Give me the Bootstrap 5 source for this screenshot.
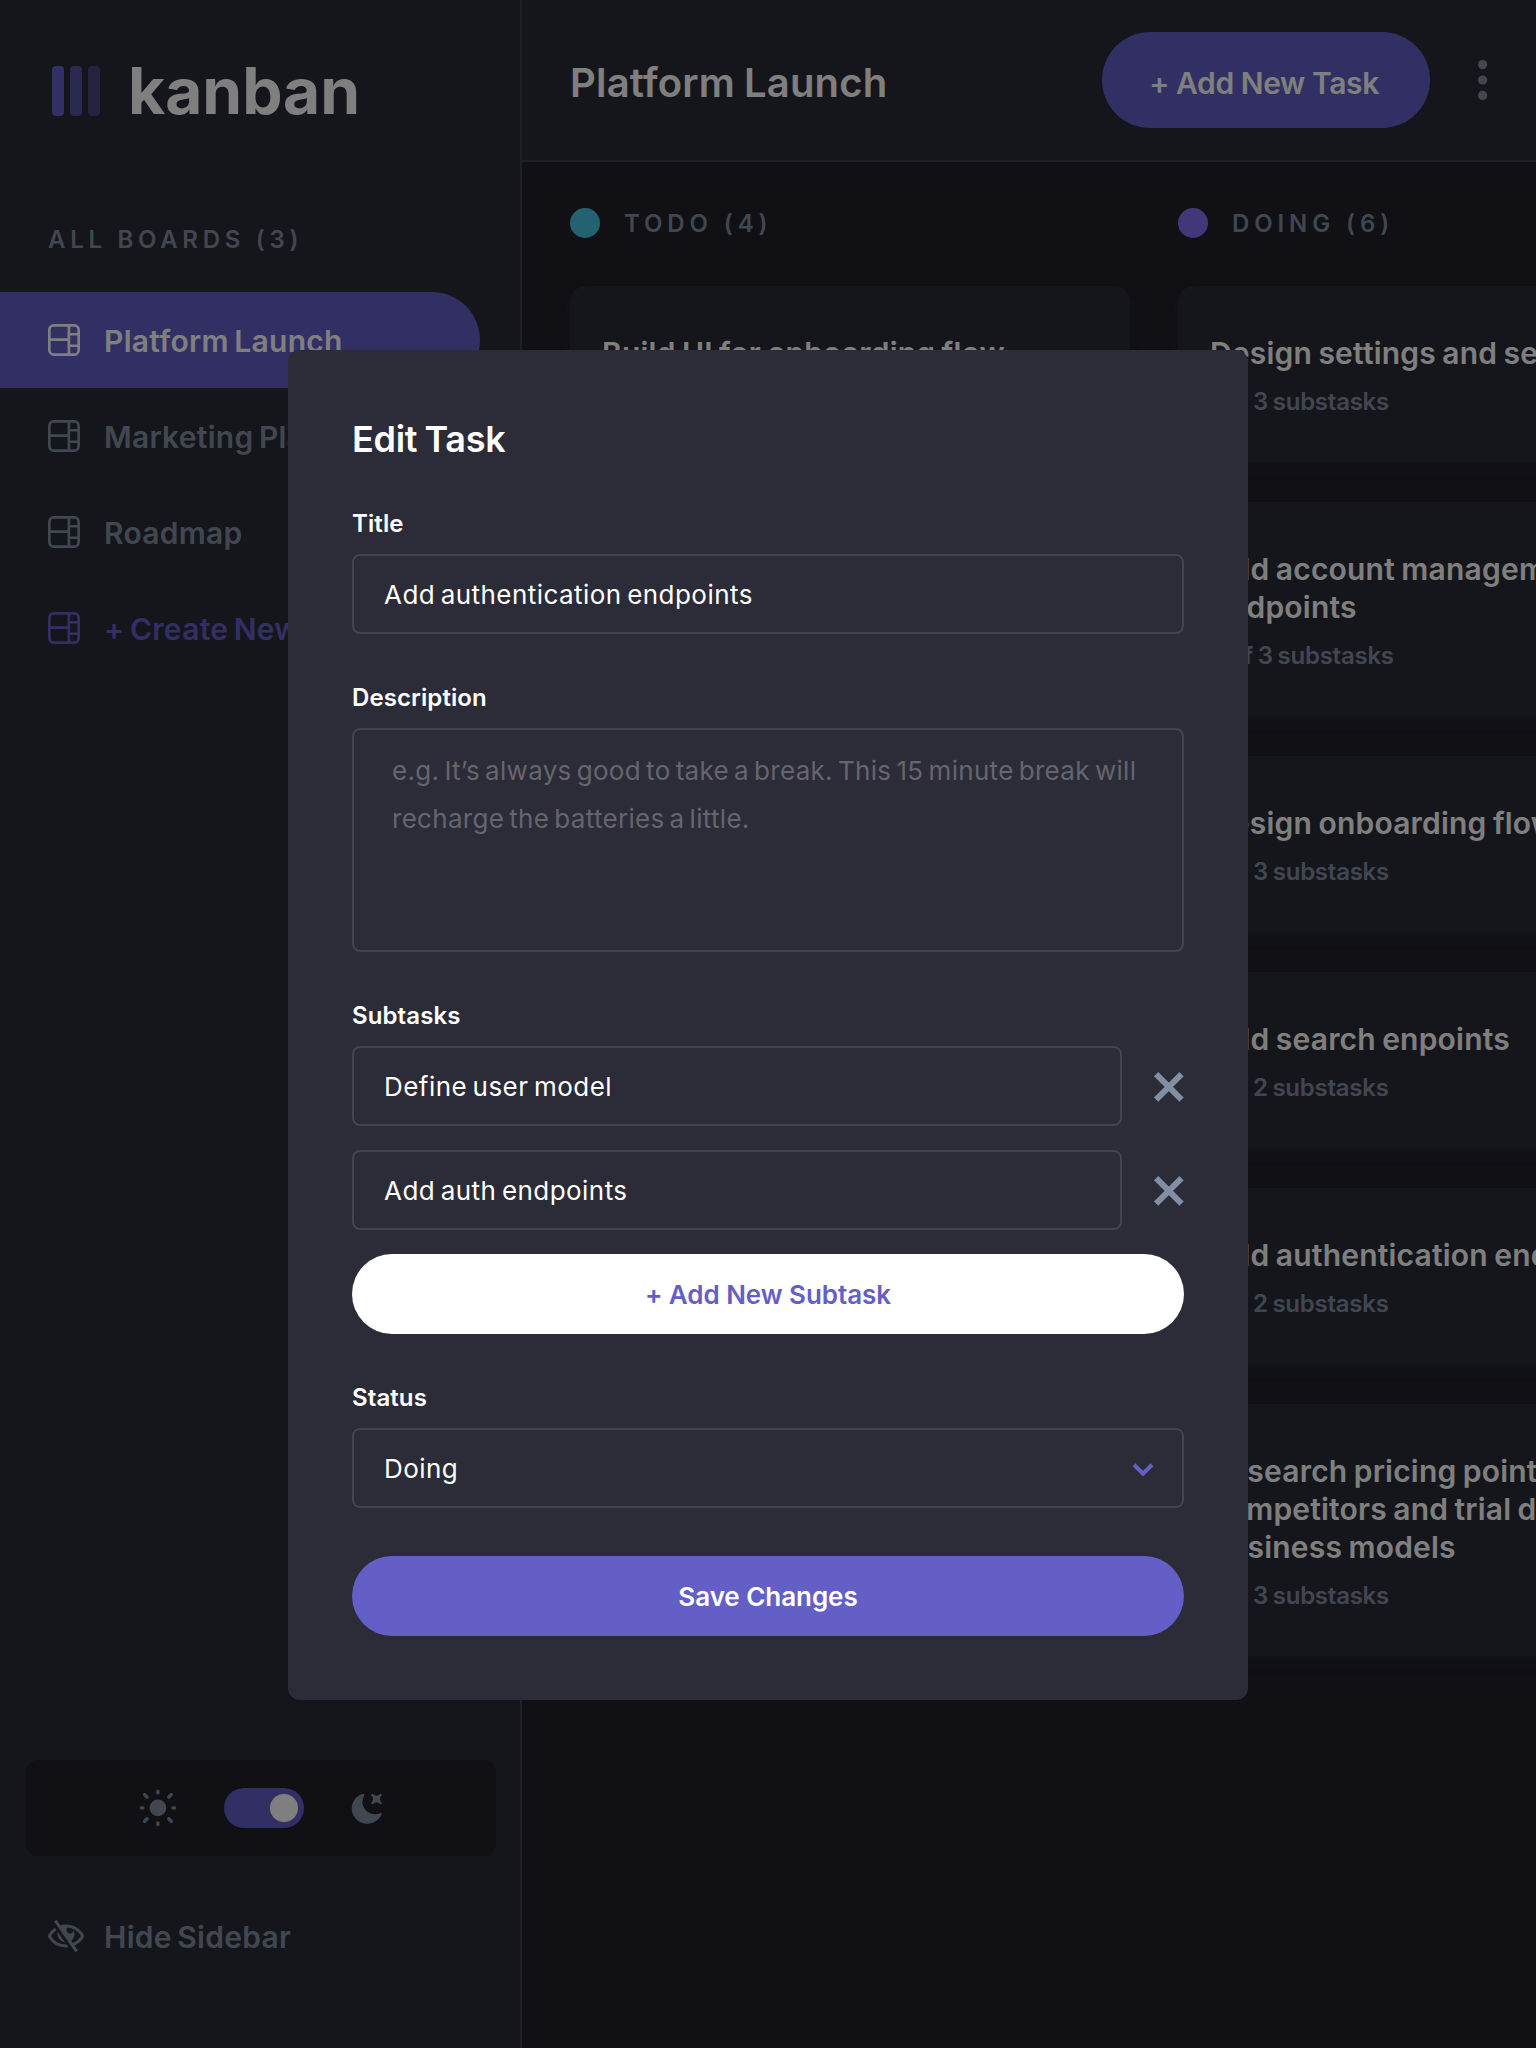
<!DOCTYPE html>
<html lang="en">
<head>
<meta charset="utf-8">
<meta name="viewport" content="width=device-width, initial-scale=1">
<title>Kanban – Platform Launch</title>
<link href="https://cdn.jsdelivr.net/npm/bootstrap@5.3.0/dist/css/bootstrap.min.css" rel="stylesheet">
<style>
  :root {
    --panel: #2b2c37;
    --canvas: #20202a;
    --line: #3e3f4e;
    --muted: #828fa3;
    --accent: #635fc7;
  }
  body {
    font-family: Inter, "Noto Sans", sans-serif;
    letter-spacing: .013em;
    word-spacing: -.09em;
    background: var(--canvas);
    color: #fff;
    overflow: hidden;
  }
  svg { display: block; flex: none; }
  .muted { color: var(--muted); }
  .eyebrow { font-size: 24px; line-height: 30px; font-weight: 600; letter-spacing: 4.9px; word-spacing: 0; color: var(--muted); padding-top: 1px; }

  /* Sidebar */
  .sidebar { width: 522px; background: var(--panel); border-right: 2px solid var(--line); padding-bottom: 64px; }
  .brand { padding: 52px 0 0 52px; gap: 28px; height: 128px; }
  .brand-bars { gap: 6px; padding-top: 14px; }
  .brand-bars span { width: 12px; height: 50px; border-radius: 4px; background: var(--accent); }
  .brand-bars span:nth-child(2) { opacity: .75; }
  .brand-bars span:nth-child(3) { opacity: .5; }
  .brand-name { font-size: 64px; line-height: 78px; font-weight: 700; letter-spacing: 0; }
  .board-head { padding: 97px 0 37px 48px; letter-spacing: 4.7px; }
  .board-link { width: 480px; height: 96px; padding: 0 48px; gap: 24px; font-size: 30px; font-weight: 600; letter-spacing: .28px; word-spacing: -2.4px; color: var(--muted); border-radius: 0 48px 48px 0; white-space: nowrap; text-decoration: none; }
  .board-link span { padding-top: 2px; }
  .board-link.active { background: var(--accent); color: #fff; }
  .board-link.create { color: var(--accent); }
  .hide-link { gap: 20px; }
  .theme-box { height: 96px; margin: 0 24px 32px 26px; border-radius: 12px; background: var(--canvas); gap: 47px; }
  .theme-switch.form-check-input { width: 80px; height: 40px; margin: 0; border: 0; border-radius: 20px; background: var(--accent); padding: 6px; display: flex; justify-content: flex-end; }
  .theme-switch span { width: 28px; height: 28px; border-radius: 50%; background: #fff; }

  /* Header */
  .topbar { height: 162px; background: var(--panel); border-bottom: 2px solid var(--line); padding: 0 48px; }
  .topbar h1 { font-size: 40px; line-height: 50px; font-weight: 600; padding-top: 6px; }
  .btn-task { width: 328px; height: 96px; border-radius: 48px; background: var(--accent); color: #fff; font-size: 30px; font-weight: 600; padding: 12px 14px 6px 10px; letter-spacing: -.4px; }
  .topbar-end { gap: 48px; }

  /* Columns */
  .board { padding: 46px 48px 0; gap: 48px; width: 2000px; }
  .task-col { width: 560px; }
  .col-head { gap: 24px; height: 30px; margin-bottom: 48px; }
  .dot { width: 30px; height: 30px; border-radius: 50%; }
  .dot-todo { background: #49c4e5; }
  .dot-doing { background: #8471f2; }
  .task-list { gap: 40px; }
  .task-card { background: var(--panel); border-radius: 16px; padding: 48px 32px 45px; box-shadow: 0 8px 12px rgba(54, 78, 126, .1); }
  .task-card h3 { font-size: 30px; line-height: 38px; font-weight: 600; margin: 0 0 15px; white-space: nowrap; }
  .task-card p { font-size: 24px; line-height: 30px; font-weight: 600; margin: 0; color: var(--muted); letter-spacing: -.25px; word-spacing: -1px; }

  /* Edit dialog */
  .modal-dialog.task-dialog { width: 960px; max-width: 960px; margin: 350px 0 0 288px; }
  .task-dialog .modal-content { background: var(--panel); border: 0; border-radius: 12px; padding: 64px; height: 1350px; color: #fff; }
  .task-dialog h2 { font-size: 36px; line-height: 46px; font-weight: 600; margin: 2px 0 46px; letter-spacing: -.3px; }
  .task-dialog .form-label { font-size: 24px; line-height: 30px; font-weight: 600; margin: 0 0 15px; padding-top: 1px; display: block; letter-spacing: .1px; }
  .task-dialog .form-control, .status-select { height: 80px; border: 2px solid #414551; border-radius: 8px; background: transparent; color: #fff; font-size: 26px; line-height: 48px; padding: 0 30px; letter-spacing: .45px; word-spacing: -2.2px; }
  .task-dialog textarea.form-control { height: 224px; padding: 17px 38px; resize: none; letter-spacing: .3px; word-spacing: -2.5px; }
  .task-dialog textarea::placeholder { color: #65656e; opacity: 1; }
  .status-select { padding-right: 28px; }
  .status-select span { padding-top: 2px; }
  .form-block { margin-bottom: 48px; }
  .subtask-list { gap: 24px; }
  .subtask-row { gap: 32px; }
  .subtask-row svg { margin-top: 2px; }
  .btn-wide { height: 80px; border-radius: 40px; font-size: 26px; font-weight: 600; width: 100%; border: 0; letter-spacing: -.05px; }
  .btn-light-pill, .btn-light-pill:hover { background: #fff; color: var(--accent); }
  .btn-accent, .btn-accent:hover { background: var(--accent); color: #fff; }
</style>
<script src="https://cdn.jsdelivr.net/npm/bootstrap@5.3.0/dist/js/bootstrap.bundle.min.js"></script>
</head>
<body>
<svg width="0" height="0" class="d-none" aria-hidden="true">
  <symbol id="icon-board" viewBox="0 0 16 16"><path fill="currentColor" d="M0 2.889A2.889 2.889 0 0 1 2.889 0H13.11A2.889 2.889 0 0 1 16 2.889V13.11A2.888 2.888 0 0 1 13.111 16H2.89A2.889 2.889 0 0 1 0 13.111V2.89Zm1.333 5.555v4.667c0 .859.697 1.556 1.556 1.556h6.889V8.444H1.333Zm8.445-1.333V1.333h-6.89A1.556 1.556 0 0 0 1.334 2.89V7.11h8.445Zm4.889-1.333H11.11v4.444h3.556V5.778Zm0 5.778H11.11v3.11h2a1.556 1.556 0 0 0 1.556-1.555v-1.555Zm0-7.112V2.89a1.555 1.555 0 0 0-1.556-1.556h-2v3.111h3.556Z"/></symbol>
  <symbol id="icon-cross" viewBox="0 0 15 15"><path fill="currentColor" d="m12.728 0 2.122 2.122L2.122 14.85 0 12.728z"/><path fill="currentColor" d="M0 2.122 2.122 0 14.85 12.728l-2.122 2.122z"/></symbol>
</svg>

<div class="d-flex vh-100">
  <aside class="sidebar d-flex flex-column flex-shrink-0">
    <div class="brand d-flex align-items-start">
      <div class="brand-bars d-flex"><span></span><span></span><span></span></div>
      <div class="brand-name">kanban</div>
    </div>
    <div class="board-head eyebrow">ALL BOARDS (3)</div>
    <nav class="d-flex flex-column">
      <a class="board-link active d-flex align-items-center"><svg width="32" height="32"><use href="#icon-board"/></svg><span>Platform Launch</span></a>
      <a class="board-link d-flex align-items-center"><svg width="32" height="32"><use href="#icon-board"/></svg><span>Marketing Plan</span></a>
      <a class="board-link d-flex align-items-center"><svg width="32" height="32"><use href="#icon-board"/></svg><span>Roadmap</span></a>
      <a class="board-link create d-flex align-items-center"><svg width="32" height="32"><use href="#icon-board"/></svg><span>+ Create New Board</span></a>
    </nav>
    <div class="mt-auto">
      <div class="theme-box d-flex align-items-center justify-content-center muted">
        <svg width="38" height="38" viewBox="-.3 -.3 19 19"><path fill="currentColor" d="M9.167 15.833a.833.833 0 0 1 .833.834v.833a.833.833 0 0 1-1.667 0v-.833a.833.833 0 0 1 .834-.834ZM3.75 13.75a.833.833 0 0 1 .59 1.422l-1.25 1.25a.833.833 0 0 1-1.18-1.178l1.25-1.25a.833.833 0 0 1 .59-.244Zm10.833 0c.221 0 .433.088.59.244l1.25 1.25a.833.833 0 0 1-1.179 1.178l-1.25-1.25a.833.833 0 0 1 .59-1.422ZM9.167 5a4.167 4.167 0 1 1 0 8.334 4.167 4.167 0 0 1 0-8.334Zm-7.5 3.333a.833.833 0 0 1 0 1.667H.833a.833.833 0 1 1 0-1.667h.834Zm15.833 0a.833.833 0 0 1 0 1.667h-.833a.833.833 0 0 1 0-1.667h.833Zm-1.667-6.666a.833.833 0 0 1 .59 1.422l-1.25 1.25a.833.833 0 1 1-1.179-1.178l1.25-1.25a.833.833 0 0 1 .59-.244Zm-13.333 0c.221 0 .433.088.59.244l1.25 1.25a.833.833 0 0 1-1.18 1.178L1.91 3.09a.833.833 0 0 1 .59-1.422ZM9.167 0A.833.833 0 0 1 10 .833v.834a.833.833 0 1 1-1.667 0V.833A.833.833 0 0 1 9.167 0Z"/></svg>
        <div class="theme-switch form-check-input"><span></span></div>
        <svg width="32" height="32" viewBox="0.3 -.2 16 16"><path fill="currentColor" d="M6.474.682c.434-.11.718.406.481.78A6.067 6.067 0 0 0 6.01 4.72c0 3.418 2.827 6.187 6.314 6.187.89.002 1.77-.182 2.584-.54.408-.18.894.165.724.57-1.16 2.775-3.944 4.73-7.194 4.73-4.292 0-7.771-3.41-7.771-7.615 0-3.541 2.466-6.518 5.807-7.37Zm8.433.07c.442-.294.969.232.674.674l-.525.787a1.943 1.943 0 0 0 0 2.157l.525.788c.295.441-.232.968-.674.673l-.787-.525a1.943 1.943 0 0 0-2.157 0l-.786.525c-.442.295-.97-.232-.675-.673l.525-.788a1.943 1.943 0 0 0 0-2.157l-.525-.787c-.295-.442.232-.968.674-.673l.787.525a1.943 1.943 0 0 0 2.157 0l.787-.526Z"/></svg>
      </div>
      <a class="board-link hide-link d-flex align-items-center"><svg width="36" height="32" viewBox="0 0 18 16"><path fill="currentColor" d="M8.522 11.223a4.252 4.252 0 0 1-3.654-5.22l3.654 5.22ZM9 12.25A8.685 8.685 0 0 1 1.5 8a8.612 8.612 0 0 1 2.76-2.864l-.86-1.23A10.112 10.112 0 0 0 .208 7.238a1.5 1.5 0 0 0 0 1.524A10.187 10.187 0 0 0 9 13.75c.414 0 .828-.025 1.239-.074l-1-1.43A8.88 8.88 0 0 1 9 12.25Zm8.792-3.488a10.14 10.14 0 0 1-4.486 4.046l1.504 2.148a.375.375 0 0 1-.092.523l-.648.453a.375.375 0 0 1-.523-.092L3.19 1.044A.375.375 0 0 1 3.282.52L3.93.068a.375.375 0 0 1 .523.092l1.735 2.479A10.308 10.308 0 0 1 9 2.25c3.746 0 7.031 2 8.792 4.988a1.5 1.5 0 0 1 0 1.524ZM16.5 8a8.674 8.674 0 0 0-6.755-4.219A1.75 1.75 0 1 0 12.75 5v-.001a4.25 4.25 0 0 1-1.154 5.366l.834 1.192A8.641 8.641 0 0 0 16.5 8Z"/></svg><span>Hide Sidebar</span></a>
    </div>
  </aside>

  <main class="flex-grow-1 overflow-hidden">
    <header class="topbar d-flex align-items-center justify-content-between">
      <h1 class="mb-0">Platform Launch</h1>
      <div class="topbar-end d-flex align-items-center">
        <button class="btn btn-task">+ Add New Task</button>
        <svg width="10" height="40" viewBox="0 0 5 20"><g fill="#828fa3"><circle cx="2.308" cy="2.308" r="2.308"/><circle cx="2.308" cy="10" r="2.308"/><circle cx="2.308" cy="17.692" r="2.308"/></g></svg>
      </div>
    </header>
    <div class="board d-flex align-items-start">
      <section class="task-col flex-shrink-0">
        <div class="col-head d-flex align-items-center"><span class="dot dot-todo"></span><span class="eyebrow">TODO (4)</span></div>
        <div class="task-list d-flex flex-column">
          <article class="task-card"><h3>Build UI for onboarding flow</h3><p>0 of 3 substasks</p></article>
        </div>
      </section>
      <section class="task-col flex-shrink-0">
        <div class="col-head d-flex align-items-center"><span class="dot dot-doing"></span><span class="eyebrow">DOING (6)</span></div>
        <div class="task-list d-flex flex-column">
          <article class="task-card"><h3>Design settings and search pages</h3><p>1 of 3 substasks</p></article>
          <article class="task-card"><h3>Add account management<br>endpoints</h3><p>2 of 3 substasks</p></article>
          <article class="task-card"><h3>Design onboarding flow</h3><p>1 of 3 substasks</p></article>
          <article class="task-card"><h3>Add search enpoints</h3><p>1 of 2 substasks</p></article>
          <article class="task-card"><h3>Add authentication endpoints</h3><p>1 of 2 substasks</p></article>
          <article class="task-card"><h3>Research pricing points of various<br>competitors and trial different<br>business models</h3><p>1 of 3 substasks</p></article>
        </div>
      </section>
    </div>
  </main>
</div>

<div class="modal-backdrop show"></div>
<div class="modal d-block" tabindex="-1" role="dialog" aria-label="Edit Task">
  <div class="modal-dialog task-dialog">
    <form class="modal-content">
      <h2>Edit Task</h2>
      <div class="form-block">
        <label class="form-label">Title</label>
        <input class="form-control" type="text" value="Add authentication endpoints">
      </div>
      <div class="form-block">
        <label class="form-label">Description</label>
        <textarea class="form-control" placeholder="e.g. It’s always good to take a break. This 15 minute break will recharge the batteries a little."></textarea>
      </div>
      <div class="form-block">
        <label class="form-label">Subtasks</label>
        <div class="subtask-list d-flex flex-column">
          <div class="subtask-row d-flex align-items-center"><input class="form-control" type="text" value="Define user model"><svg class="muted" width="30" height="30"><use href="#icon-cross"/></svg></div>
          <div class="subtask-row d-flex align-items-center"><input class="form-control" type="text" value="Add auth endpoints"><svg class="muted" width="30" height="30"><use href="#icon-cross"/></svg></div>
          <button type="button" class="btn btn-wide btn-light-pill">+ Add New Subtask</button>
        </div>
      </div>
      <div class="form-block">
        <label class="form-label">Status</label>
        <div class="status-select d-flex align-items-center justify-content-between"><span>Doing</span><svg class="mt-1" width="22" height="16" viewBox="0 0 11 8"><path d="m1 1.4 4.5 4.4L10 1.4" fill="none" stroke="#635fc7" stroke-width="2"/></svg></div>
      </div>
      <button type="button" class="btn btn-wide btn-accent">Save Changes</button>
    </form>
  </div>
</div>
</body>
</html>
